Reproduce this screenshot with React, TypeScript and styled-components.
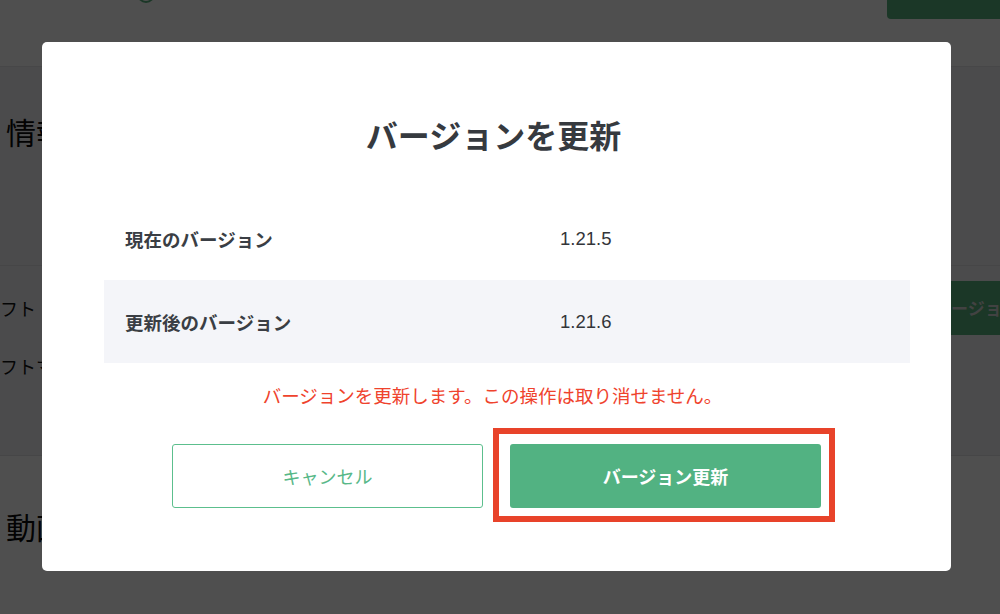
import React from "react";
import styled, { createGlobalStyle } from "styled-components";

const GlobalStyle = createGlobalStyle`
  html, body {
    margin: 0;
    padding: 0;
    width: 1000px;
    height: 614px;
    overflow: hidden;
    background: #ffffff;
  }
  * { box-sizing: border-box; }
  body {
    font-family: "Liberation Sans", "Noto Sans CJK JP", sans-serif;
  }
`;

const Page = styled.div`
  position: relative;
  width: 1000px;
  height: 614px;
  overflow: hidden;
  display: flex;
  flex-direction: column;
  background: #ffffff;
`;

const Header = styled.header`
  height: 66px;
  flex: none;
  background: #ffffff;
  display: flex;
  align-items: flex-start;
  justify-content: space-between;
  padding-left: 136px;
`;

const HeaderIcon = styled.svg`
  width: 20px;
  height: 20px;
  margin-top: -16px;
`;

const HeaderButton = styled.div`
  width: 130px;
  height: 60px;
  margin-top: -41px;
  margin-right: -17px;
  background: #58b17d;
  border-radius: 4px;
`;

const InfoSection = styled.section`
  background: #f1f2f5;
  border-top: 1px solid #e4e5e8;
  display: flex;
  flex-direction: column;
  flex: none;
`;

const SectionTitle = styled.h2<{ $h: number; $top: number }>`
  margin: 0;
  padding: ${(p) => p.$top}px 0 0 6px;
  height: ${(p) => p.$h}px;
  font-family: "Noto Sans CJK JP", sans-serif;
  font-weight: 400;
  font-size: 30px;
  line-height: 40px;
  color: #0a0a0a;
`;

const InfoRows = styled.div`
  border-top: 1px solid #e2e3e6;
  height: 190px;
  display: flex;
  flex-direction: column;
  padding-top: 30px;
  gap: 34px;
`;

const InfoRow = styled.div`
  display: flex;
  justify-content: space-between;
  align-items: center;
  height: 24px;
  font-family: "Noto Sans CJK JP", sans-serif;
  font-size: 18px;
  color: #111;
`;

const RowButton = styled.div`
  width: 110px;
  height: 54px;
  margin-right: -30px;
  background: #58b17d;
  border-radius: 4px;
  color: #d6d6d6;
  font-family: "Noto Sans CJK JP", sans-serif;
  font-weight: 700;
  font-size: 17px;
  line-height: 54px;
  padding-left: 14px;
  white-space: nowrap;
  overflow: hidden;
`;

const VideoSection = styled.section`
  flex: 1;
  background: #ffffff;
  border-top: 1px solid #e2e3e6;
`;

const Overlay = styled.div`
  position: absolute;
  inset: 0;
  background: rgba(0, 0, 0, 0.69);
  display: flex;
  align-items: flex-start;
  padding: 42px 0 0 42px;
`;

const Modal = styled.div`
  width: 909px;
  height: 529px;
  background: #ffffff;
  border-radius: 5px;
  display: flex;
  flex-direction: column;
  align-items: center;
  font-family: "Liberation Sans", "Noto Sans CJK JP", sans-serif;
`;

const Title = styled.h1`
  margin: 73px 0 0;
  font-size: 32px;
  line-height: 45px;
  font-weight: 700;
  color: #363a3f;
  padding-right: 6px;
`;

const Table = styled.div`
  margin-top: 37px;
  align-self: stretch;
  margin-left: 62px;
  margin-right: 41px;
  display: flex;
  flex-direction: column;
`;

const TableRow = styled.div<{ $striped?: boolean }>`
  height: 83px;
  display: grid;
  grid-template-columns: 456px 1fr;
  align-items: center;
  background: ${(p) => (p.$striped ? "#f4f5f9" : "#ffffff")};
`;

const Label = styled.div`
  padding-left: 21px;
  font-size: 18.5px;
  font-weight: 700;
  color: #3a3e44;
`;

const Value = styled.div`
  font-size: 18.5px;
  color: #333539;
`;

const Notice = styled.p`
  margin: 20px 0 0;
  font-size: 18.5px;
  line-height: 28px;
  color: #ef432d;
  padding-right: 8px;
`;

const Actions = styled.div`
  margin-top: 33px;
  display: flex;
  gap: 27px;
`;

const Button = styled.button<{ $primary?: boolean }>`
  width: 311px;
  height: 64px;
  border-radius: 3px;
  font-family: "Liberation Sans", "Noto Sans CJK JP", sans-serif;
  font-size: 18px;
  cursor: pointer;
  border: ${(p) => (p.$primary ? "none" : "1.5px solid #5cbf8d")};
  background: ${(p) => (p.$primary ? "#52b282" : "#ffffff")};
  color: ${(p) => (p.$primary ? "#ffffff" : "#58b888")};
  font-weight: ${(p) => (p.$primary ? 700 : 400)};
`;

const Highlight = styled.div`
  position: relative;
  &::after {
    content: "";
    position: absolute;
    top: -16px;
    left: -17px;
    right: -14px;
    bottom: -14px;
    border: 6px solid #e8432a;
    pointer-events: none;
  }
`;

export default function App() {
  return (
    <>
      <GlobalStyle />
      <Page>
        <Header>
          <HeaderIcon viewBox="0 0 20 20">
            <circle cx="10" cy="10" r="8" fill="none" stroke="#58b17d" strokeWidth="2" />
          </HeaderIcon>
          <HeaderButton />
        </Header>
        <InfoSection>
          <SectionTitle $h={198} $top={44}>情報</SectionTitle>
          <InfoRows>
            <InfoRow>
              <span>フト</span>
              <RowButton>バージョン</RowButton>
            </InfoRow>
            <InfoRow>
              <span>フトマ</span>
            </InfoRow>
          </InfoRows>
        </InfoSection>
        <VideoSection>
          <SectionTitle $h={120} $top={50}>動画</SectionTitle>
        </VideoSection>
        <Overlay>
          <Modal>
            <Title>バージョンを更新</Title>
            <Table>
              <TableRow>
                <Label>現在のバージョン</Label>
                <Value>1.21.5</Value>
              </TableRow>
              <TableRow $striped>
                <Label>更新後のバージョン</Label>
                <Value>1.21.6</Value>
              </TableRow>
            </Table>
            <Notice>バージョンを更新します。この操作は取り消せません。</Notice>
            <Actions>
              <Button>キャンセル</Button>
              <Highlight>
                <Button $primary>バージョン更新</Button>
              </Highlight>
            </Actions>
          </Modal>
        </Overlay>
      </Page>
    </>
  );
}
